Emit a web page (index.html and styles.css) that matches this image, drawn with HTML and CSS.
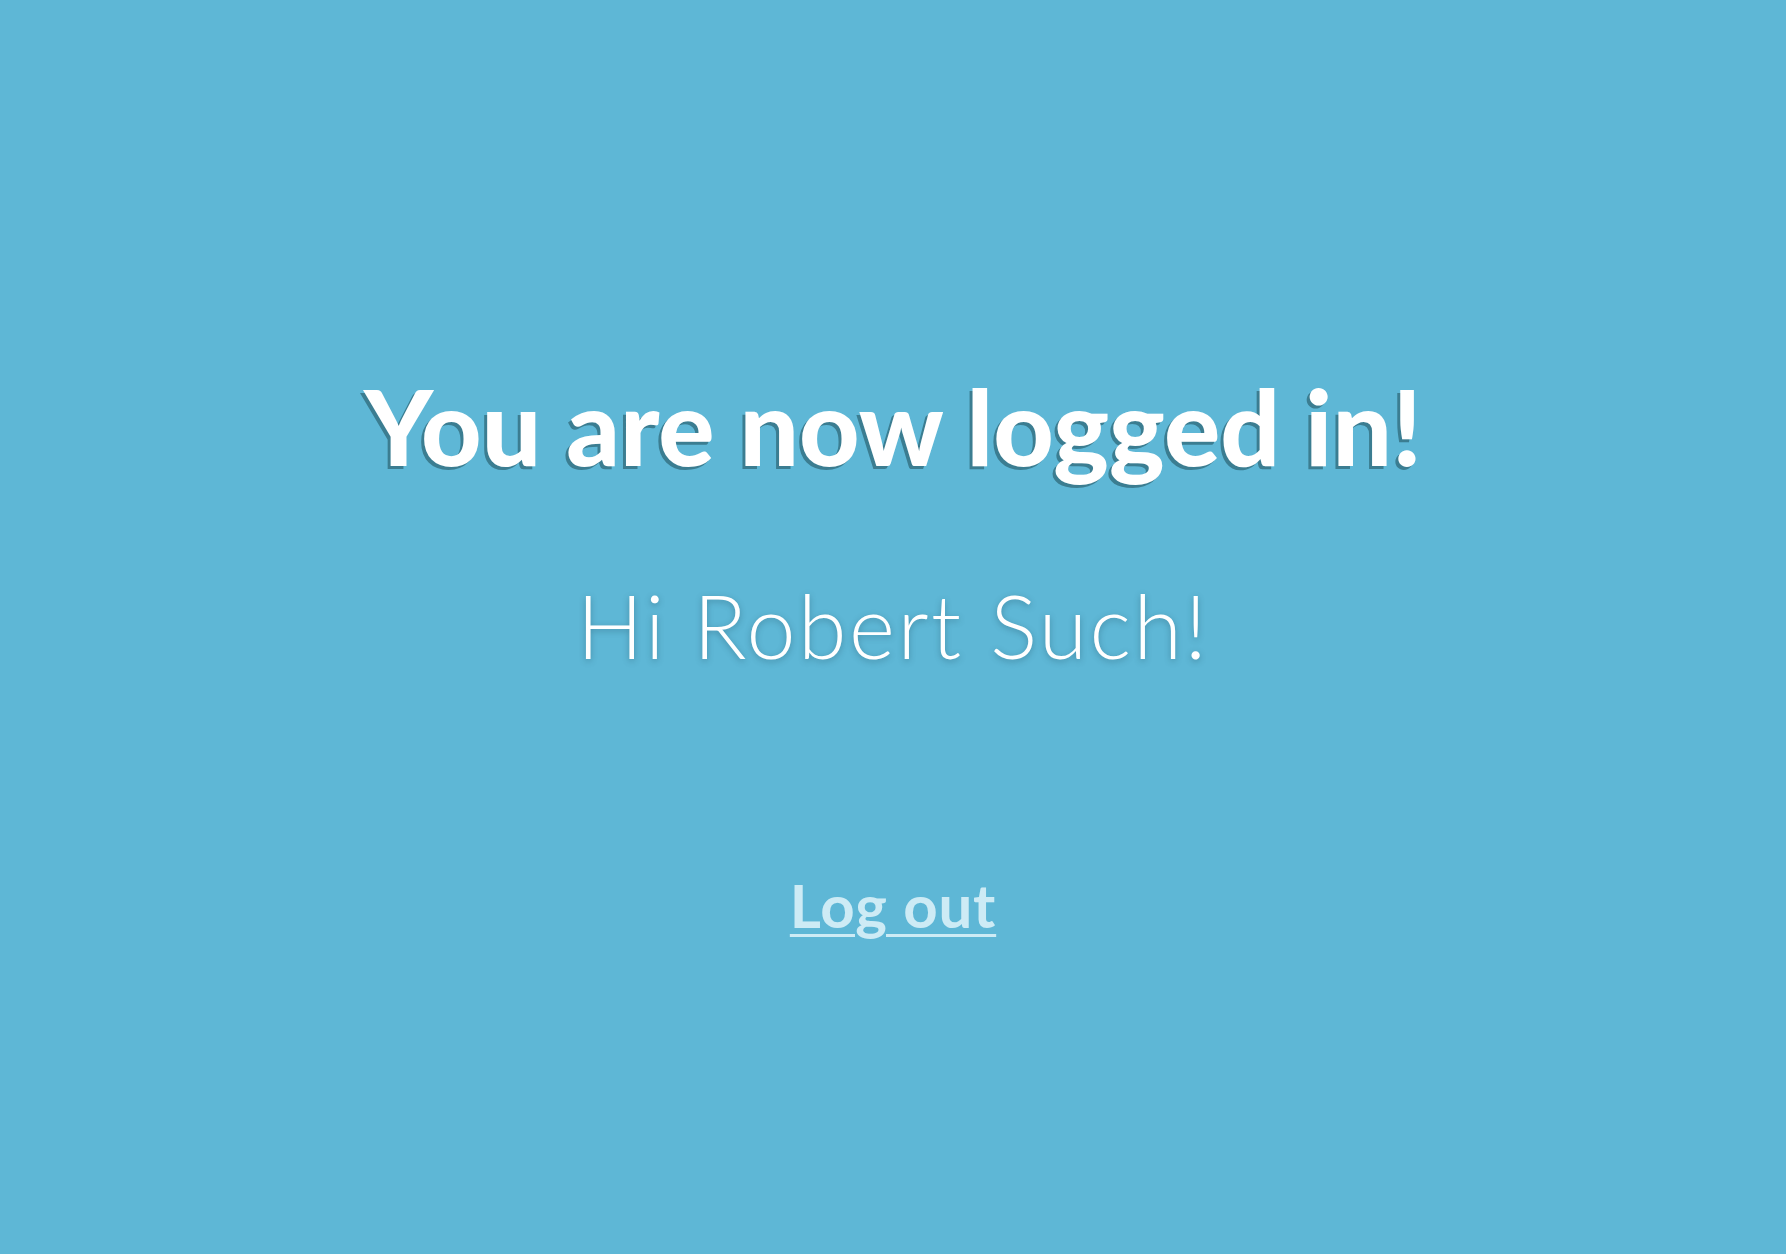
FILE: index.html
```html
<!DOCTYPE html>
<html lang="en">
<head>
<meta charset="utf-8">
<title>Logged in</title>
<link rel="stylesheet" href="styles.css">
</head>
<body>
<main class="page">
  <h1 class="title">You are now logged in!</h1>
  <p class="greeting">Hi Robert Such!</p>
  <a class="logout" href="#">Log out</a>
</main>
</body>
</html>
```

FILE: styles.css
```css
html, body {
  margin: 0;
  padding: 0;
  height: 100%;
}
body {
  background: #5eb7d6;
  font-family: "Lato", "Liberation Sans", sans-serif;
}
.page {
  height: 1254px;
  display: flex;
  flex-direction: column;
  align-items: center;
  box-sizing: border-box;
  padding-top: 360px;
}
.title {
  margin: 0;
  font-family: "Lato", sans-serif;
  font-weight: 900;
  font-size: 105px;
  line-height: 130px;
  color: #ffffff;
  text-shadow: -3px 3px 0 #3b7d91;
  letter-spacing: 0;
}
.greeting {
  margin: 80px 0 0;
  font-family: "Lato", sans-serif;
  font-weight: 300;
  font-size: 88px;
  line-height: 110px;
  letter-spacing: 2.5px;
  color: #ffffff;
  text-shadow: 0 2px 6px rgba(40, 90, 110, 0.45);
}
.logout {
  margin-top: 190px;
  font-family: "Lato", sans-serif;
  font-weight: 700;
  font-size: 60px;
  line-height: 70px;
  letter-spacing: 0.8px;
  color: #cdebf5;
  text-decoration: underline;
  text-decoration-thickness: 3px;
  text-underline-offset: 6px;
}
```
